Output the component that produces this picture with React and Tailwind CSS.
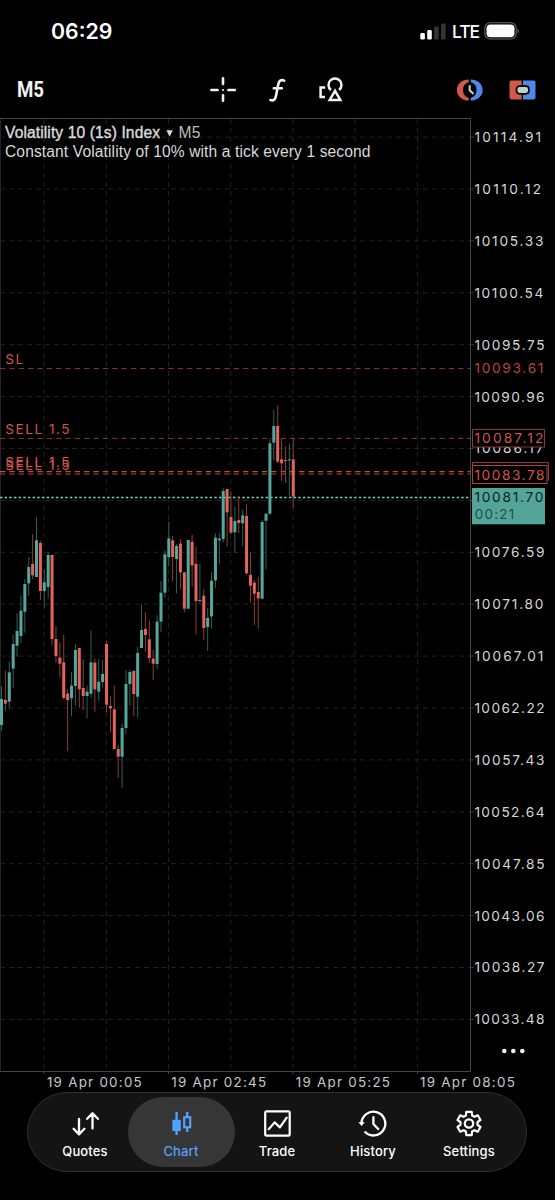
// Candles as [direction, high, body top, body bottom, low], in thirds of a point
const CANDLES = [
  ["u", 528, 567, 645, 663], ["d", 482, 570, 581, 602], ["u", 455, 487, 575, 596],
  ["u", 375, 402, 476, 535], ["u", 310, 363, 407, 440], ["u", 256, 302, 378, 400],
  ["u", 207, 222, 305, 368], ["u", 141, 171, 220, 258], ["d", 73, 162, 196, 208],
  ["u", 22, 91, 201, 201], ["d", 93, 99, 243, 270], ["u", 178, 217, 243, 292],
  ["u", 126, 135, 231, 266], ["d", 135, 135, 387, 405], ["d", 349, 387, 438, 458],
  ["d", 397, 443, 461, 503], ["d", 374, 457, 564, 568], ["d", 538, 551, 570, 723],
  ["u", 486, 527, 565, 618], ["u", 402, 420, 528, 588], ["d", 414, 414, 538, 594],
  ["d", 447, 534, 558, 600], ["u", 527, 545, 558, 626], ["u", 361, 457, 551, 563],
  ["d", 446, 458, 538, 605], ["u", 448, 515, 545, 572], ["u", 450, 492, 516, 533],
  ["d", 393, 402, 584, 607], ["d", 558, 588, 595, 667], ["d", 527, 598, 717, 717],
  ["d", 705, 717, 740, 804], ["u", 641, 654, 740, 834], ["u", 480, 522, 654, 672],
  ["u", 479, 486, 522, 587], ["d", 481, 483, 552, 618], ["u", 411, 429, 560, 623],
  ["u", 283, 360, 414, 414], ["d", 307, 357, 375, 426], ["d", 331, 388, 444, 459],
  ["d", 420, 446, 461, 510], ["u", 316, 335, 462, 478], ["u", 213, 248, 335, 367],
  ["u", 120, 133, 248, 262], ["u", 35, 85, 142, 169], ["d", 78, 91, 141, 214],
  ["u", 102, 108, 147, 250], ["d", 87, 101, 187, 236], ["d", 187, 187, 296, 307],
  ["u", 90, 90, 296, 296], ["d", 74, 95, 166, 230], ["d", 110, 162, 273, 373],
  ["u", 161, 270, 273, 280], ["d", 237, 257, 354, 390], ["u", 294, 324, 351, 423],
  ["u", 186, 212, 319, 354], ["u", 70, 83, 211, 234], ["u", 70, 86, 91, 163],
  ["u", -67, -57, 87, 97], ["d", -63, -63, 7, 110], ["d", -53, 21, 68, 71],
  ["u", -10, 33, 67, 128], ["d", -42, 30, 39, 70], ["u", -2, 16, 40, 108],
  ["d", -18, 18, 190, 193], ["d", 126, 195, 227, 278], ["d", 210, 218, 251, 345],
  ["d", 200, 246, 265, 356], ["u", 30, 36, 266, 268], ["u", 11, 11, 32, 178],
  ["u", -213, -200, 11, 15], ["u", -300, -252, -202, -149], ["d", -314, -252, -145, -142],
  ["d", -213, -152, -140, -87], ["d", -190, -150, -147, -81], ["u", -200, -152, -149, -44],
  ["d", -215, -152, -40, -6],
];

const PRICES = [
  "10114.91", "10110.12", "10105.33", "10100.54", "10095.75", "10090.96",
  "10086.17", "", "10076.59", "10071.80", "10067.01", "10062.22", "10057.43",
  "10052.64", "10047.85", "10043.06", "10038.27", "10033.48",
];

const TIMES = ["19 Apr 00:05", "19 Apr 02:45", "19 Apr 05:25", "19 Apr 08:05"];

const GRID_X = [44, 106.3, 168.5, 230.7, 292.8, 355, 417.4];

const ORDERS = [
  { label: "SL", y: 251.5, color: "#7d3732", width: 1 },
  { label: "SELL 1.5", y: 321.5, color: "#7d3732", width: 1 },
  { label: "SELL 1.5", y: 354.6, color: "#c04d40", width: 1.4 },
  { label: "SELL 1.5", y: 357, color: "#b0463b", width: 1.2 },
];

const candleY = (v) => 393 + v / 3;
const gridY = (i) => 20.1 + i * 51.9;

const StatusBar = () => (
  <div className="flex h-[62px] items-center justify-between pl-[51px] pr-[35px]">
    <span className="mt-px text-[21.3px] font-semibold leading-none text-white">
      06:29
    </span>
    <div className="flex items-center">
      <svg width="26" height="17" viewBox="0 0 26 17">
        <rect x="0.3" y="10" width="4.6" height="6.6" rx="1.4" fill="#fff" />
        <rect x="7.2" y="7" width="4.6" height="9.6" rx="1.4" fill="#fff" />
        <rect x="14.1" y="3.6" width="4.6" height="13" rx="1.4" fill="#343434" />
        <rect x="21" y="0.4" width="4.6" height="16.2" rx="1.4" fill="#343434" />
      </svg>
      <span className="ml-[6px] mt-px w-[27px] text-[17.5px] font-medium leading-none tracking-[-1.1px] text-white">
        LTE
      </span>
      <svg className="ml-[5px]" width="36" height="18" viewBox="0 0 36 18">
        <rect x="0.8" y="0.8" width="31.4" height="16.2" rx="5.4" fill="none" stroke="#6a6a6a" strokeWidth="1.1" />
        <rect x="2.5" y="2.5" width="28" height="12.8" rx="4" fill="#fff" />
        <path d="M33.6 6.4c1.6.8 1.6 4.2 0 5z" fill="#6a6a6a" />
      </svg>
    </div>
  </div>
);

const Toolbar = () => (
  <div className="flex h-[55px] items-center px-[17px]">
    <span className="w-[193px] origin-left scale-x-[0.85] text-[22px] font-bold leading-none text-[#f2f2f2] font-['Roboto',sans-serif]">
      M5
    </span>

    {/* Crosshair */}
    <svg className="shrink-0" width="28" height="28" viewBox="0 0 28 28" stroke="#f2f2f2" strokeWidth="2.6" strokeLinecap="round">
      <path d="M13 2.400v5.600M13 19.200v5.600M1.400 14h6.200M18.400 14h6.400" />
      <circle cx="13" cy="14" r="1.1" fill="#f2f2f2" stroke="none" />
    </svg>

    {/* Indicators */}
    <svg className="ml-[30px] shrink-0" width="20" height="28" viewBox="0 0 20 28" fill="none" stroke="#f2f2f2" strokeWidth="2.6" strokeLinecap="round">
      <path d="M16.2 4.600c-3.400-1.300-5.200.2-5.900 3.700L8 19.800c-.7 3.800-2.400 5.200-5.600 4.300M5.800 12.300h8" />
    </svg>

    {/* Objects */}
    <svg className="ml-[30px] shrink-0" width="28" height="28" viewBox="0 0 28 28" fill="none" stroke="#f2f2f2" strokeWidth="2.5">
      <path d="M7.200 11.600H2.600v9.400H7" />
      <path d="M12.900 14a6.500 6.500 0 1 1 8.200 0" />
      <path d="M17 14.800l-5.300 9.200h10.600z" />
    </svg>

    <svg className="ml-auto shrink-0" width="28" height="24" viewBox="0 0 28 24">
      <path d="M12.800 1.400C6 1.400.800 6 .800 12s5.200 10.600 12 10.600V20A8.400 8.400 0 0 1 12.800 4z" fill="#d0594b" />
      <path d="M14.700 1.400C21.500 1.400 26.700 6 26.700 12s-5.200 10.600-12 10.600V20A8.400 8.400 0 0 0 14.700 4z" fill="#4f87ea" />
      <path d="M13.700 7.200v5l3.800 3.900" fill="none" stroke="#c3cfca" strokeWidth="2.100" />
    </svg>
    <svg className="ml-[25px] mr-[2px] shrink-0" width="27" height="20" viewBox="0 0 27 20">
      <path d="M2.500.500H12.700v19H2.500a2 2 0 0 1-2-2v-15a2 2 0 0 1 2-2z" fill="#d0594b" />
      <path d="M14 .500h10.500a2 2 0 0 1 2 2v15a2 2 0 0 1-2 2H14z" fill="#4f87ea" />
      <rect x="7.500" y="6.200" width="12.400" height="7.600" rx="3" fill="#c3cfca" stroke="#000" strokeWidth="1.700" />
    </svg>
  </div>
);

// The digit 1 is narrower than the others
const Price = ({ y, fill, children }) => (
  <text
    x="474.400"
    y={y}
    fill={fill}
    fontSize="13.700"
    letterSpacing="0.700"
    textLength={70.8 - 1.1 * (children.split("1").length - 2)}
  >
    {children}
  </text>
);

const PriceChart = () => (
  <svg className="block shrink-0" width="555" height="975" viewBox="0 0 555 975" fontSize="13.4" letterSpacing="1.25">
    {/* Grid */}
    <g stroke="#1f2223" strokeWidth="1" strokeDasharray="5 4">
      {PRICES.map((_, i) => (
        <path key={i} d={`M0 ${gridY(i)}H470`} />
      ))}
      {GRID_X.map((x) => (
        <path key={x} d={`M${x} 2V954`} />
      ))}
    </g>
    <path d="M0 1.500H470.500V954.500H0" fill="none" stroke="#454545" />
    <path d="M0.500 2V954" stroke="#242424" />
    <g stroke="#454545">
      {PRICES.map((_, i) => (
        <path key={i} d={`M470 ${gridY(i)}h3.500`} />
      ))}
      {[0, 2, 4, 6].map((i) => (
        <path key={i} d={`M${GRID_X[i]} 954v3`} />
      ))}
    </g>

    {/* Order levels */}
    {ORDERS.map((order, i) => (
      <g key={i}>
        <path
          d={`M0 ${order.y}H470`}
          stroke={order.color}
          strokeWidth={order.width}
          strokeDasharray="5.300 4.050"
        />
        <text x="5.300" y={order.y - 4.400} fill="#d05547" fontSize="13.600" letterSpacing="1.500">
          {order.label}
        </text>
      </g>
    ))}
    <path d="M0 380.500H470" stroke="#74d3c2" strokeWidth="1.300" strokeDasharray="2.400 2.260" />

    {/* Candles */}
    {CANDLES.map(([dir, high, top, bottom, low], i) => {
      const x = 1.5 + i * 3.89;
      return (
        <g key={i}>
          <path
            d={`M${x} ${candleY(high)}V${candleY(low)}`}
            stroke={dir === "u" ? "#2d6159" : "#8c3d38"}
          />
          <rect
            x={x - 1.5}
            y={candleY(top)}
            width="3"
            height={(bottom - top) / 3}
            fill={dir === "u" ? "#56a79b" : "#e2645d"}
          />
        </g>
      );
    })}

    {/* Price axis */}
    {PRICES.map((price, i) => price && (
      <Price key={price} y={gridY(i) + 4.9} fill="#d6d6d6">{price}</Price>
    ))}
    <Price y="256" fill="#b8463b">10093.61</Price>

    <rect x="472.500" y="312.500" width="72" height="17.500" fill="#000" stroke="#8c3a32" />
    <Price y="326.300" fill="#d05547">10087.12</Price>

    <rect x="472.500" y="345.500" width="76" height="17.500" fill="#000" stroke="#8c3a32" />
    <rect x="472.500" y="348.500" width="74.500" height="18" fill="#000" stroke="#a8443a" />
    <Price y="362.500" fill="#d05547">10083.78</Price>

    <rect x="472" y="371" width="73" height="36.300" fill="#53a59a" />
    <Price y="385.300" fill="#0c1f1c">10081.70</Price>
    <text x="474.800" y="402.300" fill="#1f4f48">00:21</text>

    {/* Time axis */}
    <g fill="#c9c9c9">
      {TIMES.map((time, i) => (
        <text key={time} x={46.9 + i * 124.4} y="970">
          {time}
        </text>
      ))}
    </g>
    <g fill="#f2f2f2">
      <circle cx="504.300" cy="934" r="2.300" />
      <circle cx="513.300" cy="934" r="2.300" />
      <circle cx="522.300" cy="934" r="2.300" />
    </g>

    {/* Symbol */}
    <g fontFamily="Liberation Sans, Arial, sans-serif" letterSpacing="0" fontSize="15.600" fill="#d9d9d9">
      <text x="5" y="20.500" textLength="155" stroke="#d9d9d9" strokeWidth="0.400">
        Volatility 10 (1s) Index
      </text>
      <path d="M166.400 13.300h6.400l-3.200 6.400z" />
      <text x="178.500" y="20.500" textLength="22" fill="#bdbdbd">M5</text>
      <text x="5" y="39.500" textLength="365.500">
        Constant Volatility of 10% with a tick every 1 second
      </text>
    </g>
  </svg>
);

// Six-toothed cog outline around (14, 14.5)
const cogPoints = [0, 60, 120, 180, 240, 300]
  .flatMap((a) => [[a - 21, 8.6], [a - 13, 12], [a + 13, 12], [a + 21, 8.6]])
  .map(([a, r]) => {
    const rad = (a * Math.PI) / 180;
    return `${(14 + r * Math.sin(rad)).toFixed(2)},${(14.5 - r * Math.cos(rad)).toFixed(2)}`;
  })
  .join(" ");

const TABS = [
  {
    name: "Quotes",
    icon: (
      <path d="M8 10v15.200M2.600 19.800l5.400 5.600 5.400-5.600M21.500 19.400V4.400M16.100 9.800l5.400-5.600 5.400 5.600" strokeWidth="2.300" />
    ),
  },
  {
    name: "Chart",
    active: true,
    icon: (
      <>
        <path d="M9.600 3v23" strokeWidth="2.300" strokeLinecap="butt" />
        <rect x="5.400" y="10.800" width="8.400" height="11.200" fill="currentColor" stroke="none" />
        <path d="M20.200 3v5M20.200 18v5" strokeWidth="2.300" strokeLinecap="butt" />
        <rect x="17.200" y="8.200" width="6" height="10" strokeWidth="2.200" strokeLinejoin="miter" />
      </>
    ),
  },
  {
    name: "Trade",
    icon: (
      <>
        <rect x="2.200" y="2.400" width="24.500" height="24.200" rx="1.200" strokeWidth="2.200" />
        <path d="M5.700 20.200l5.900-6.800 5.300 5 6.800-9.800" strokeWidth="2.200" />
      </>
    ),
  },
  {
    name: "History",
    icon: (
      <>
        <path d="M2.500 14.600A11.900 11.900 0 1 1 5.600 22.600" strokeWidth="2.300" strokeLinecap="butt" />
        <path d="M-.600 13.200h6.400L2.600 17z" fill="currentColor" stroke="none" />
        <path d="M14.400 8.200v6.800l4.800 5" strokeWidth="2.300" />
      </>
    ),
  },
  {
    name: "Settings",
    icon: (
      <>
        <polygon points={cogPoints} strokeWidth="2.200" />
        <circle cx="14" cy="14.500" r="4.200" strokeWidth="2.300" />
      </>
    ),
  },
];

const TabBar = () => (
  <nav className="ml-[27px] flex h-[80px] w-[500px] items-center justify-center rounded-full border border-[#303030] bg-[#141414]">
    {TABS.map((tab) => (
      <div
        key={tab.name}
        className={
          tab.active
            ? "-mx-[5.5px] flex h-[70px] w-[107px] shrink-0 flex-col items-center rounded-full bg-[#363636] pt-[12px] text-[#51a2fa]"
            : "flex h-[70px] w-24 shrink-0 flex-col items-center pt-[12px] text-white"
        }
      >
        <svg className="overflow-visible" width="29" height="29" viewBox="0 0 29 29" fill="none" stroke="currentColor" strokeLinecap="round" strokeLinejoin="round">
          {tab.icon}
        </svg>
        <span className="mt-[5px] text-[13px] font-medium leading-4 tracking-[0.15px]">{tab.name}</span>
      </div>
    ))}
  </nav>
);

const App = () => {
  return (
    <div className="flex h-[1200px] w-[555px] flex-col overflow-hidden bg-black font-['Inter',sans-serif]">
      <StatusBar />
      <Toolbar />
      <PriceChart />
      <TabBar />
    </div>
  );
};

export default App;
